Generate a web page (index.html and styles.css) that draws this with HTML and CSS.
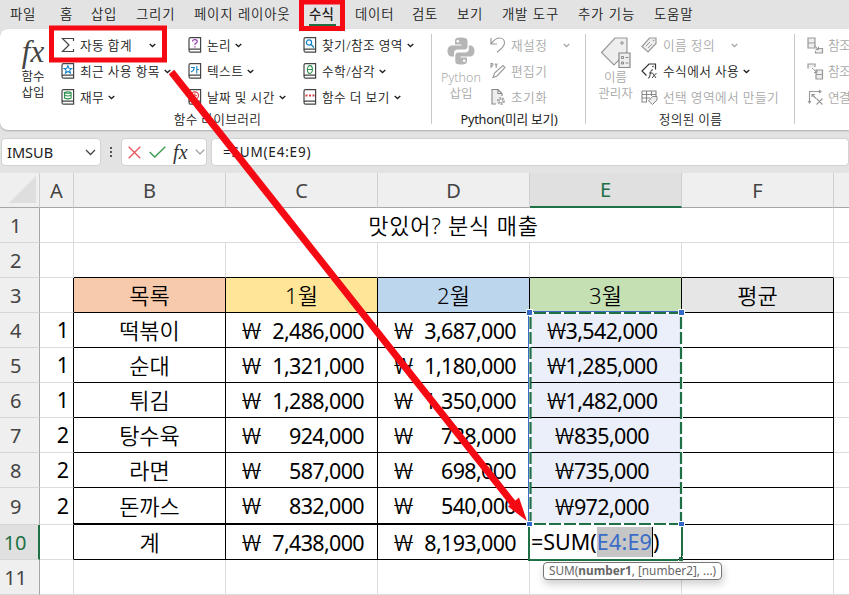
FILE: index.html
```
<!DOCTYPE html>
<html lang="ko">
<head>
<meta charset="utf-8">
<title>맛있어? 분식 매출</title>
<link rel="stylesheet" href="styles.css">
</head>
<body>
<svg class="defs" width="0" height="0" aria-hidden="true">
  <symbol id="chev" viewBox="0 0 7 5"><path d="M.7 1l2.800 2.600L6.300 1" fill="none" stroke="currentColor" stroke-width="1.300"/></symbol>
  <symbol id="book" viewBox="0 0 14 16"><path d="M1 13V2.200Q1 .7 2.500.7H12.600V15.200H2.600Q1 15.200 1 13.600Q1 12.200 2.600 12.200H12.600" fill="none" stroke="#444" stroke-width="1.200"/></symbol>
</svg>
<nav class="tabs">
  <span>파일</span><span>홈</span><span>삽입</span><span>그리기</span><span>페이지 레이아웃</span><span class="active">수식</span><span>데이터</span><span>검토</span><span>보기</span><span>개발 도구</span><span>추가 기능</span><span>도움말</span>
</nav>
<section class="ribbon">
  <div class="group library">
    <div class="tools">
      <div class="big"><i class="fx">fx</i><span>함수<br>삽입</span></div>
      <div class="col c1">
        <div class="cmd"><svg width="14" height="16" viewBox="0 0 14 16"><path d="M12.500 4V1.500H1.500L8 8L1.500 14.500H12.500V12" fill="none" stroke="#444" stroke-width="1.200"/></svg><span>자동 합계</span><svg class="chev far"><use href="#chev"/></svg></div>
        <div class="cmd"><svg width="14" height="16"><use href="#book"/><path d="M6.900 2.700l1.100 2.500 2.800.2-2.100 1.800.7 2.800-2.500-1.500-2.400 1.500.6-2.800L3 5.400l2.800-.2z" fill="none" stroke="#1583c7" stroke-width="1.100"/></svg><span>최근 사용 항목</span><svg class="chev"><use href="#chev"/></svg></div>
        <div class="cmd"><svg width="14" height="16"><use href="#book"/><path d="M3.500 3.500v5.500q3.300 1.800 6.600 0V3.500q-3.300-1.600-6.600 0q3.300 1.600 6.600 0M3.500 6.300q3.300 1.500 6.600 0" fill="none" stroke="#2c914b" stroke-width="1.100"/></svg><span>재무</span><svg class="chev"><use href="#chev"/></svg></div>
      </div>
      <div class="col c2">
        <div class="cmd"><svg width="14" height="16"><use href="#book"/><path d="M4.500 4.600q0-2 2.300-2T9.200 4.400q0 1.100-1.200 1.700T6.900 8M6.900 9.200v1.300" fill="none" stroke="#9b3fb0" stroke-width="1.200"/></svg><span>논리</span><svg class="chev"><use href="#chev"/></svg></div>
        <div class="cmd"><svg width="14" height="16"><use href="#book"/><path d="M3 4.500h3.200q0 3-3.200 4.500M8.800 3v7.500M8.800 6.500h2" fill="none" stroke="#1583c7" stroke-width="1.100"/></svg><span>텍스트</span><svg class="chev"><use href="#chev"/></svg></div>
        <div class="cmd"><svg width="14" height="16"><use href="#book"/><circle cx="6.900" cy="6.500" r="3.600" fill="none" stroke="#e04045" stroke-width="1.200"/><path d="M6.900 4.300v2.400h2" fill="none" stroke="#e04045"/></svg><span>날짜 및 시간</span><svg class="chev"><use href="#chev"/></svg></div>
      </div>
      <div class="col c3">
        <div class="cmd"><svg width="14" height="16"><use href="#book"/><circle cx="6" cy="5.500" r="2.600" fill="none" stroke="#1583c7" stroke-width="1.200"/><path d="M8 7.500l3 3" stroke="#1583c7" stroke-width="1.400"/></svg><span>찾기/참조 영역</span><svg class="chev"><use href="#chev"/></svg></div>
        <div class="cmd"><svg width="14" height="16"><use href="#book"/><ellipse cx="6.900" cy="6.500" rx="2.500" ry="3.900" fill="none" stroke="#2c914b" stroke-width="1.100"/><path d="M4.400 6.500h5" stroke="#2c914b"/></svg><span>수학/삼각</span><svg class="chev"><use href="#chev"/></svg></div>
        <div class="cmd"><svg width="14" height="16"><use href="#book"/><path d="M2.500 6.500h2M6 6.500h2M9.500 6.500h2" stroke="#e04045" stroke-width="2"/></svg><span>함수 더 보기</span><svg class="chev"><use href="#chev"/></svg></div>
      </div>
    </div>
    <div class="caption">함수 라이브러리</div>
  </div>
  <div class="group python">
    <div class="tools off">
      <div class="big"><svg width="28" height="28" viewBox="0 0 28 28"><path fill="#b5b5b5" d="M13.500.5c-4 0-5.500 1-5.500 3.500V7.500h6.500v1H5C2 8.500.5 11 .5 14S2 19.500 4.500 19.500H7V16c0-2 1.500-3.500 3.500-3.500h7c1.700 0 3-1.300 3-3V4c0-2.500-2-3.500-7-3.500z"/><path fill="#b5b5b5" d="M14.500 27.500c4 0 5.500-1 5.500-3.500V20.500h-6.500v-1H23c3 0 4.500-2.500 4.500-5.500S26 8.500 23.500 8.500H21.800V12c0 2-1.500 3.500-3.500 3.500h-7c-1.700 0-3 1.300-3 3V24c0 2.500 1.400 3.500 6.200 3.500z"/><circle cx="10.800" cy="4.200" r="1.300" fill="#fff"/><circle cx="17.200" cy="23.800" r="1.300" fill="#fff"/></svg><span>Python<br>삽입</span></div>
      <div class="col">
        <div class="cmd"><svg width="16" height="18" viewBox="0 0 16 18"><path d="M1 2v6h6M1.300 7.700C4 4 6 2 9.500 2c3 0 5 2.200 5 4.700 0 4-3.500 6.500-7.500 9.500" fill="none" stroke="#999" stroke-width="1.200"/></svg><span>재설정</span><svg class="chev far"><use href="#chev"/></svg></div>
        <div class="cmd"><svg width="16" height="18" viewBox="0 0 16 18"><path d="M3 15.500l1.500-4.500 8.500-7.500 2 2L7 14zM1 6V1.500h1.300q1.200 1.200 0 2.400H1M5 1.500l1.200 2L7.500 1.500M6.200 3.500V6" fill="none" stroke="#999" stroke-width="1.100"/></svg><span>편집기</span></div>
        <div class="cmd"><svg width="16" height="18" viewBox="0 0 16 18"><path d="M6 16H2V1.500h6l4 4V8M8 1.500v4h4" fill="#eee" stroke="#888" stroke-width="1.100"/><circle cx="11" cy="13" r="3" fill="none" stroke="#aaa" stroke-width="2" stroke-dasharray="2 1"/><circle cx="11" cy="13" r="1.800" fill="none" stroke="#aaa"/></svg><span>초기화</span></div>
      </div>
    </div>
    <div class="caption">Python(미리 보기)</div>
  </div>
  <div class="group names">
    <div class="tools off">
      <div class="big"><svg width="32" height="32" viewBox="0 0 32 32"><path d="M27 1H15L1.500 15.500 14 28 27 15z" fill="#eee" stroke="#999" stroke-width="1.200"/><circle cx="22" cy="6" r="1.200" fill="none" stroke="#888"/><path d="M19 16h11v14.500H19z" fill="#eee" stroke="#888" stroke-width="1.200"/><path d="M21.500 19.500h2v2h-2zM21.500 25h2v2h-2zM25.500 20.500h3M25.500 26h3" fill="none" stroke="#888"/></svg><span>이름<br>관리자</span></div>
      <div class="col">
        <div class="cmd"><svg width="17" height="16" viewBox="0 0 17 16"><path d="M8.500 1H15v5.500L7 15 1 9.500z" fill="#eee" stroke="#999" stroke-width="1.200"/><path d="M5 9l4-4M7 11l4-4" stroke="#999"/><circle cx="12.500" cy="3.500" r=".8" fill="#999"/></svg><span>이름 정의</span><svg class="chev far"><use href="#chev"/></svg></div>
        <div class="cmd on"><svg width="17" height="16" viewBox="0 0 17 16"><path d="M5.500 12.500L1 8l7-7h6.500v5.500" fill="none" stroke="#333" stroke-width="1.200"/><circle cx="12" cy="3.500" r=".8" fill="#333"/><path d="M12 7q-1.500-1-2 1L8.500 14q-.4 1.500-1.500 1M8 10h3.500M11.500 10l3.500 5M15.500 10l-4.500 5" fill="none" stroke="#444"/></svg><span>수식에서 사용</span><svg class="chev"><use href="#chev"/></svg></div>
        <div class="cmd"><svg width="17" height="16" viewBox="0 0 17 16"><path d="M1 2h14v5M1 2v11h5M1 5.500h14M1 9h8M5.500 2v11M10.500 2v5" fill="none" stroke="#888" stroke-width="1.100"/><path d="M11.500 7.500H16V11l-4.500 4.500-4-3.500z" fill="#eee" stroke="#888"/></svg><span>선택 영역에서 만들기</span></div>
      </div>
    </div>
    <div class="caption">정의된 이름</div>
  </div>
  <div class="group trace">
    <div class="tools off"><div class="col">
      <div class="cmd"><svg width="17" height="17" viewBox="0 0 17 17"><path d="M1 1h7v5H1zM1 6v5h7V6M9.500 11.500h6V16h-7v-2" fill="#eee" stroke="#999" stroke-width="1.200"/><path d="M7 8l4.500 4.500M11.500 9.500v3h-3" fill="none" stroke="#999"/></svg><span>참조</span></div>
      <div class="cmd"><svg width="17" height="17" viewBox="0 0 17 17"><path d="M1 5.500V1h7v3M9 7h6.500v9H9zM9 11.500h6.500" fill="#eee" stroke="#999" stroke-width="1.200"/><path d="M5 5l5 4.500M10 6.500v3H7" fill="none" stroke="#999"/></svg><span>참조</span></div>
      <div class="cmd"><svg width="17" height="17" viewBox="0 0 17 17"><path d="M2.500 14V2.500h11M1 12l1.500 2L4 12M12 1l2 1.500L12 4M5 8V5.500h3M5 5.500l4 4M9.500 9.500l6 6M15.500 9.500l-6 6" fill="none" stroke="#999" stroke-width="1.100"/></svg><span>연결</span></div>
    </div></div>
  </div>
</section>
<section class="formula">
  <div class="box name"><span>IMSUB</span><svg width="11" height="7" viewBox="0 0 11 7"><path d="M1 1l4.500 4.500L10 1" fill="none" stroke="#444" stroke-width="1.300"/></svg></div>
  <svg class="dots" width="4" height="12"><path d="M1 1h2v2H1zM1 5h2v2H1zM1 9h2v2H1z" fill="#555"/></svg>
  <div class="box actions">
    <svg width="13" height="13" viewBox="0 0 13 13"><path d="M.7.7l11.600 11.600M12.300.7L.7 12.300" stroke="#e5555a" stroke-width="1.300"/></svg>
    <svg width="17" height="12" viewBox="0 0 17 12"><path d="M.7 6l5 5L16.300.7" fill="none" stroke="#35994f" stroke-width="1.300"/></svg>
    <i class="fx">fx</i>
    <svg width="10" height="6" viewBox="0 0 10 6"><path d="M.7.7L5 5 9.300.7" fill="none" stroke="#999" stroke-width="1.200"/></svg>
  </div>
  <div class="box input">=SUM(E4:E9)</div>
</section>
<main class="sheet">
  <div class="ch corner"><svg width="27" height="27"><path d="M27 0v27H0z" fill="#dedede"/></svg></div>
  <div class="ch">A</div><div class="ch">B</div><div class="ch">C</div><div class="ch">D</div><div class="ch sel">E</div><div class="ch">F</div><div class="ch"></div>

  <div class="rh">1</div><div class="c"></div><div class="c title">맛있어? 분식 매출</div><div class="c"></div>

  <div class="rh">2</div><div class="c"></div><div class="c kb"></div><div class="c kb"></div><div class="c kb"></div><div class="c kb"></div><div class="c kb"></div><div class="c"></div>

  <div class="rh">3</div><div class="c kr"></div><div class="c k h1">목록</div><div class="c k h2">1월</div><div class="c k h3">2월</div><div class="c k h4">3월</div><div class="c k h5">평균</div><div class="c"></div>

  <div class="rh">4</div><div class="c kr idx">1</div><div class="c k">떡볶이</div><div class="c k won"><i>₩</i><span>2,486,000</span></div><div class="c k won"><i>₩</i><span>3,687,000</span></div><div class="c k pick"><i>₩</i>3,542,000</div><div class="c k"></div><div class="c"></div>

  <div class="rh">5</div><div class="c kr idx">1</div><div class="c k">순대</div><div class="c k won"><i>₩</i><span>1,321,000</span></div><div class="c k won"><i>₩</i><span>1,180,000</span></div><div class="c k pick"><i>₩</i>1,285,000</div><div class="c k"></div><div class="c"></div>

  <div class="rh">6</div><div class="c kr idx">1</div><div class="c k">튀김</div><div class="c k won"><i>₩</i><span>1,288,000</span></div><div class="c k won"><i>₩</i><span>1,350,000</span></div><div class="c k pick"><i>₩</i>1,482,000</div><div class="c k"></div><div class="c"></div>

  <div class="rh">7</div><div class="c kr idx">2</div><div class="c k">탕수육</div><div class="c k won"><i>₩</i><span>924,000</span></div><div class="c k won"><i>₩</i><span>738,000</span></div><div class="c k pick"><i>₩</i>835,000</div><div class="c k"></div><div class="c"></div>

  <div class="rh">8</div><div class="c kr idx">2</div><div class="c k">라면</div><div class="c k won"><i>₩</i><span>587,000</span></div><div class="c k won"><i>₩</i><span>698,000</span></div><div class="c k pick"><i>₩</i>735,000</div><div class="c k"></div><div class="c"></div>

  <div class="rh">9</div><div class="c kr idx">2</div><div class="c k thick">돈까스</div><div class="c k won thick"><i>₩</i><span>832,000</span></div><div class="c k won thick"><i>₩</i><span>540,000</span></div><div class="c k pick"><i>₩</i>972,000</div><div class="c k"></div><div class="c"></div>

  <div class="rh sel">10</div><div class="c kr"></div><div class="c k">계</div><div class="c k won"><i>₩</i><span>7,438,000</span></div><div class="c k won"><i>₩</i><span>8,193,000</span></div><div class="c k edit"><span>=SUM(</span><mark>E4:E9</mark><span>)</span></div><div class="c k"></div><div class="c"></div>

  <div class="rh">11</div><div class="c"></div><div class="c"></div><div class="c"></div><div class="c"></div><div class="c"></div><div class="c"></div><div class="c"></div>
</main>
<div class="hint">SUM(<b>number1</b>, [number2], ...)</div>
<svg class="overlay" width="849" height="595" viewBox="0 0 849 595">
  <path d="M528.500 312V524M682.500 312V524M529 311.500H682" stroke="#3a6cc8" fill="none"/>
  <path d="M530 313H682V524H530z" fill="none" stroke="#fff" stroke-width="2"/>
  <path d="M530 313H682M530 524H682" fill="none" stroke="#1f7145" stroke-width="2" stroke-dasharray="12 3" stroke-dashoffset="-4"/>
  <path d="M530.500 313V524M681 313V524" fill="none" stroke="#1f7145" stroke-width="2.200" stroke-dasharray="12 3" stroke-dashoffset="-4"/>
  <path d="M529 526V560H678M682 526V556" fill="none" stroke="#1f7145" stroke-width="2"/>
  <path d="M679 557h4v4h-4z" fill="#1f7145"/>
  <path d="M526 309h7v7h-7zM678 309h7v7h-7zM526 521h7v6h-7zM678 521h7v6h-7z" fill="#fff"/>
  <path d="M527 310h5v5h-5zM679 310h5v5h-5zM527 522h5v4h-5zM679 522h5v4h-5z" fill="#3268c8"/>
  <path d="M171.500 72L515 506" stroke="#f50a14" stroke-width="7" fill="none"/>
  <path d="M527 521L508 506.500 519 497.500z" fill="#f50a14"/>
  <rect x="51.500" y="28" width="113" height="32" fill="none" stroke="#f50a14" stroke-width="5"/>
  <rect x="301.500" y="2" width="41" height="26.500" fill="none" stroke="#f50a14" stroke-width="5"/>
</svg>
</body>
</html>
```
FILE: styles.css
```
* { box-sizing: border-box; }
body {
  margin: 0;
  width: 849px;
  height: 595px;
  overflow: hidden;
  position: relative;
  background: #e3e3e3;
  font-family: "Noto Sans", "Noto Sans CJK KR", sans-serif;
  font-weight: 350;
  color: #202020;
}
.defs { position: absolute; }
.tabs {
  display: grid;
  grid-template-columns: 50px 31px 45px 58px 115px 46px 57px 45px 45px 76px 76px 60px;
  padding-left: 10px;
  height: 29px;
  font: 350 13.400px/27px "Noto Sans CJK KR", sans-serif;
  letter-spacing: .8px;
  white-space: nowrap;
}
.tabs .active { font-weight: 500; letter-spacing: .3px; }
.tabs .active::after {
  content: "";
  display: block;
  width: 27px;
  height: 2px;
  margin-top: -3px;
  background: #1f7145;
}
.ribbon {
  display: flex;
  height: 101px;
  background: #fff;
  border-radius: 8px 0 0 8px;
  box-shadow: 0 1px 2px #aaa;
  font-size: 12.700px;
  overflow: hidden;
  margin-bottom: 8px;
}
.group {
  flex: none;
  position: relative;
  padding-top: 3px;
}
.library { width: 432px; }
.python { width: 154px; }
.names { width: 209px; }
.trace { width: 54px; }
.group:not(.trace)::after {
  content: "";
  position: absolute;
  right: 0;
  top: 5px;
  height: 90px;
  border-right: 1px solid #c8c8c8;
}
.tools { display: flex; height: 78px; }
.big {
  text-align: center;
  font-size: 12.500px;
  line-height: 16px;
  display: flex;
  flex-direction: column;
  align-items: center;
  white-space: nowrap;
}
.library .big { width: 61px; padding: 4px 0 0 5px; }
.python .big { width: 58px; padding-top: 5px; }
.names .big { width: 55px; padding: 5px 0 0 4px; }
.python .big svg { margin-bottom: 5px; }
.names .big svg { margin-bottom: 1px; }
.fx { font-family: "Liberation Serif", serif; font-style: italic; color: #444; }
.big .fx { font-size: 31px; line-height: 32px; margin-bottom: 1px; }
.cmd {
  display: flex;
  align-items: center;
  height: 26px;
  white-space: nowrap;
  letter-spacing: .4px;
}
.cmd > span { margin: -1px 4px 0 5px; }
.chev { width: 7px; height: 5px; }
.chev.far { margin-left: 13px; }
.c1 { width: 127px; }
.c2 { width: 115px; }
.python .far, .names .far { margin-left: 12px; }
.off { color: #a9a9a9; }
.off .on { color: #202020; }
.trace .col { padding-left: 12px; }
.trace .cmd > span { margin-right: 0; letter-spacing: -.7px; margin-left: 4px; }
.caption { text-align: center; line-height: 18px; letter-spacing: .3px; padding-left: 3px; }
.python .caption { letter-spacing: -.2px; font-weight: 400; padding-left: 0; }
.names .caption { padding-left: 0; }
.formula {
  display: flex;
  align-items: center;
  height: 28px;
  margin-bottom: 7px;
}
.box {
  display: flex;
  align-items: center;
  height: 28px;
  background: #fff;
  border: 1px solid #d2d2d2;
  border-radius: 4px;
  font-size: 14.500px;
  font-weight: 400;
}
.name { width: 101px; margin-left: 1px; padding: 0 4px 0 5px; justify-content: space-between; }
.dots { margin: 0 8px; }
.actions { width: 87px; padding: 0 1px 0 6px; justify-content: space-between; }
.actions .fx { font-size: 20px; color: #333; }
.input {
  width: 645px;
  margin-left: 4px;
  padding-left: 11px;
  font: 13.500px "Noto Sans", sans-serif;
  letter-spacing: .8px;
}
.sheet {
  display: grid;
  grid-template-columns: 40px 34px 152px 152px 152px 152px 152px 16px;
  grid-template-rows: 35px repeat(8, 35px) 37px 35px 35px;
  background: #fff;
  color: #000;
  font-size: 22px;
}
.ch, .rh {
  display: flex;
  align-items: center;
  justify-content: center;
  background: #efefef;
  color: #444;
  font-size: 20px;
  font-weight: 400;
}
.rh { letter-spacing: -.2px; }
.ch { border-bottom: 1px solid #a6a6a6; border-right: 1px solid #d0d0d0; }
.rh { border-bottom: 1px solid #d6d6d6; border-right: 1px solid #a6a6a6; padding-right: 8px; }
.corner { padding: 0 0 1px 5px; }
.ch.sel { background: #e0e0e0; color: #1f7145; border-bottom: 2px solid #1f7145; }
.rh.sel { background: #e0e0e0; color: #1f7145; border-right: 2px solid #1f7145; }
.c {
  display: flex;
  align-items: center;
  justify-content: center;
  border-right: 1px solid #dcdcdc;
  border-bottom: 1px solid #dcdcdc;
  line-height: 34px;
  white-space: pre;
  overflow: hidden;
}
.c i {
  font-style: normal;
  display: inline-block;
  font-weight: 300;
  transform: scaleX(1.4);
  transform-origin: left;
}
.title { grid-column: span 5; letter-spacing: .8px; }
.k { border-color: #000; }
.kb { border-bottom-color: #000; }
.kr { border-right-color: #000; }
.thick { border-bottom-width: 2px; }
.h1 { background: #f7caac; }
.h2 { background: #ffe598; }
.h3 { background: #bcd6ee; }
.h4 { background: #c5e0b3; }
.h5 { background: #e6e6e6; }
.idx, .won, .pick, .edit { font-size: 21.500px; font-weight: 400; }
.idx { justify-content: flex-end; padding-right: 4px; }
.won { justify-content: space-between; padding: 1px 13px 0 16px; letter-spacing: -.65px; }
.pick { background: #eaeff9; padding: 1px 7px 0 0; letter-spacing: -.65px; }
.pick i { margin-right: 6px; }
.edit { justify-content: flex-start; padding-left: 1px; }
.edit mark { background: #c6c6c6; color: #3a6cc8; line-height: 30px; border-right: 1px solid #000; letter-spacing: .2px; }
.hint {
  position: absolute;
  left: 543px;
  top: 562px;
  width: 179px;
  height: 18px;
  border: 1px solid #777;
  border-radius: 4px;
  background: #fff;
  box-shadow: 1px 4px 8px rgba(0, 0, 0, .2);
  color: #666;
  font-size: 11.800px;
  font-weight: 400;
  line-height: 15px;
  padding-left: 5px;
  white-space: nowrap;
}
.overlay { position: absolute; left: 0; top: 0; }
```
